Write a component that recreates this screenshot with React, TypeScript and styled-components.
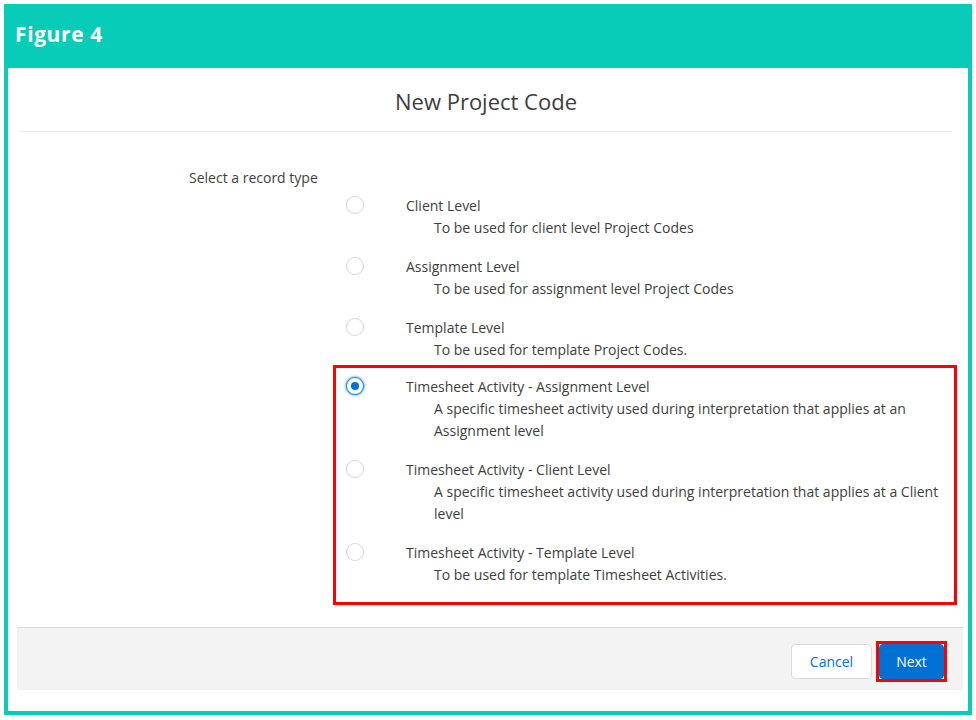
import React from 'react';
import styled, { createGlobalStyle } from 'styled-components';

const GlobalStyle = createGlobalStyle`
  html, body {
    margin: 0;
    padding: 0;
    background: #ffffff;
  }
  body {
    font-family: 'Open Sans', 'Liberation Sans', sans-serif;
    color: #3e3e3c;
  }
`;

const Frame = styled.div`
  margin: 4px;
  width: 968px;
  height: 711px;
  box-sizing: border-box;
  border: 4px solid #06ccb8;
  border-top: none;
  display: flex;
  flex-direction: column;
`;

const FigureBar = styled.div`
  height: 64px;
  margin: 0 -4px;
  background: #06ccb8;
  display: flex;
  align-items: center;
  padding-left: 11px;
  padding-bottom: 4px;
  box-sizing: border-box;
  color: #ffffff;
  font-family: 'Open Sans', sans-serif;
  font-weight: 700;
  font-size: 21px;
  letter-spacing: 0.6px;
`;

const Modal = styled.div`
  flex: 1;
  display: flex;
  flex-direction: column;
  background: #ffffff;
`;

const ModalHeader = styled.div`
  height: 64px;
  margin: 0 16px 0 12px;
  border-bottom: 1px solid #e8e8e8;
  display: flex;
  align-items: center;
  justify-content: center;
  font-size: 22px;
  color: #3e3e3c;
  padding-top: 3px;
  box-sizing: border-box;
`;

const ModalBody = styled.div`
  padding: 35px 0 0 0;
`;

const FieldLabel = styled.div`
  padding-left: 181px;
  font-size: 14px;
  line-height: 22px;
  color: #3e3e3c;
`;

const OptionGroup = styled.div<{ $highlight?: boolean }>`
  margin-left: 325px;
  width: 624px;
  box-sizing: border-box;
  border: 3px solid ${(p) => (p.$highlight ? '#ff0000' : 'transparent')};
  margin-top: ${(p) => (p.$highlight ? '1px' : '3px')};
  padding: ${(p) => (p.$highlight ? '8px 0 16px' : '0')};
  display: flex;
  flex-direction: column;
  gap: 17px;
`;

const OptionRow = styled.label`
  display: flex;
  align-items: flex-start;
  padding-left: 10px;
  cursor: pointer;
`;

const RadioCircle = styled.span<{ $checked?: boolean }>`
  flex: none;
  width: 18px;
  height: 18px;
  margin-top: 1px;
  border-radius: 50%;
  box-sizing: border-box;
  border: 1px solid ${(p) => (p.$checked ? '#1589ee' : '#d8d6d4')};
  background: #ffffff;
  box-shadow: ${(p) => (p.$checked ? '0 0 3px #0070d2' : 'none')};
  display: flex;
  align-items: center;
  justify-content: center;

  &::after {
    content: '';
    display: ${(p) => (p.$checked ? 'block' : 'none')};
    width: 8px;
    height: 8px;
    border-radius: 50%;
    background: #0070d2;
  }
`;

const OptionText = styled.div`
  margin-left: 42px;
  display: flex;
  flex-direction: column;
  font-size: 14px;
  line-height: 22px;
`;

const OptionTitle = styled.span`
  color: #3e3e3c;
`;

const OptionDesc = styled.span`
  padding-left: 28px;
  max-width: 520px;
  color: #3e3e3c;
`;

const Footer = styled.div`
  margin: 22px 5px 0 9px;
  height: 63px;
  box-sizing: border-box;
  background: #f3f3f3;
  border-top: 1px solid #dddbda;
  display: flex;
  align-items: center;
  justify-content: flex-end;
  padding: 4px 16px 0 0;
  gap: 4px;
`;

const Button = styled.button<{ $brand?: boolean }>`
  height: 35px;
  box-sizing: border-box;
  border-radius: 4px;
  font-family: 'Open Sans', sans-serif;
  font-size: 14px;
  cursor: pointer;
  padding: 0;
  width: ${(p) => (p.$brand ? '65px' : '81px')};
  border: 1px solid ${(p) => (p.$brand ? '#0070d2' : '#dddbda')};
  background: ${(p) => (p.$brand ? '#0070d2' : '#ffffff')};
  color: ${(p) => (p.$brand ? '#ffffff' : '#0070d2')};
`;

const Callout = styled.div`
  border: 3px solid #ff0000;
  display: flex;
`;

type Option = {
  title: string;
  desc: string;
  checked?: boolean;
};

const plainOptions: Option[] = [
  { title: 'Client Level', desc: 'To be used for client level Project Codes' },
  { title: 'Assignment Level', desc: 'To be used for assignment level Project Codes' },
  { title: 'Template Level', desc: 'To be used for template Project Codes.' },
];

const timesheetOptions: Option[] = [
  {
    title: 'Timesheet Activity - Assignment Level',
    desc: 'A specific timesheet activity used during interpretation that applies at an Assignment level',
    checked: true,
  },
  {
    title: 'Timesheet Activity - Client Level',
    desc: 'A specific timesheet activity used during interpretation that applies at a Client level',
  },
  {
    title: 'Timesheet Activity - Template Level',
    desc: 'To be used for template Timesheet Activities.',
  },
];

const OptionItem: React.FC<{ option: Option }> = ({ option }) => (
  <OptionRow>
    <RadioCircle $checked={option.checked} />
    <OptionText>
      <OptionTitle>{option.title}</OptionTitle>
      <OptionDesc>{option.desc}</OptionDesc>
    </OptionText>
  </OptionRow>
);

const App: React.FC = () => {
  return (
    <>
      <GlobalStyle />
      <Frame>
        <FigureBar>Figure 4</FigureBar>
        <Modal>
          <ModalHeader>New Project Code</ModalHeader>
          <ModalBody>
            <FieldLabel>Select a record type</FieldLabel>
            <OptionGroup>
              {plainOptions.map((o) => (
                <OptionItem key={o.title} option={o} />
              ))}
            </OptionGroup>
            <OptionGroup $highlight>
              {timesheetOptions.map((o) => (
                <OptionItem key={o.title} option={o} />
              ))}
            </OptionGroup>
          </ModalBody>
          <Footer>
            <Button>Cancel</Button>
            <Callout>
              <Button $brand>Next</Button>
            </Callout>
          </Footer>
        </Modal>
      </Frame>
    </>
  );
};

export default App;
